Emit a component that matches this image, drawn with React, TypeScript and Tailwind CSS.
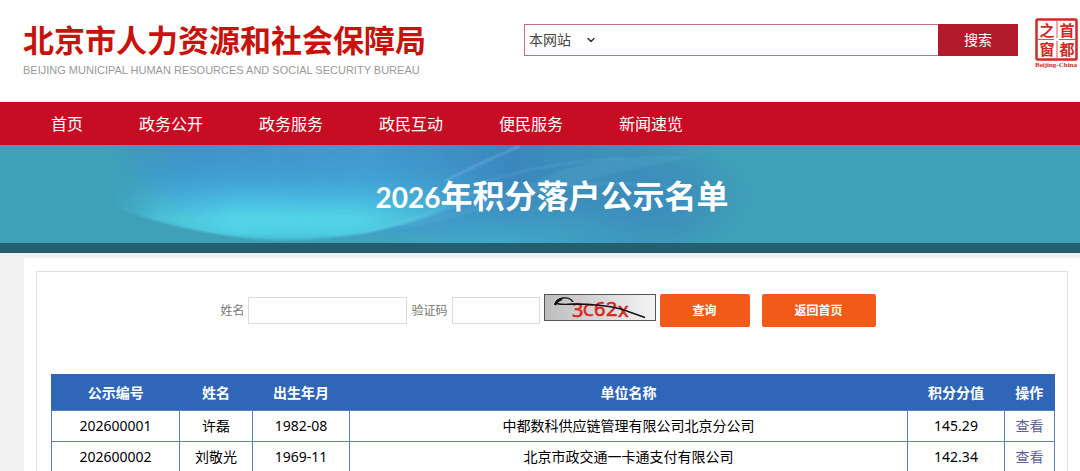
import React, { useState } from 'react';
import { ChevronDown } from 'lucide-react';

const navItems = ['首页', '政务公开', '政务服务', '政民互动', '便民服务', '新闻速览'];

const people = [
    { id: '202600001', name: '许磊', birth: '1982-08', company: '中都数科供应链管理有限公司北京分公司', score: '145.29' },
    { id: '202600002', name: '刘敬光', birth: '1969-11', company: '北京市政交通一卡通支付有限公司', score: '142.34' },
];

function Seal() {
    return (
        <svg width="48" height="54" viewBox="0 0 48 54" className="shrink-0" role="img" aria-label="首都之窗">
            <rect x="4.500" y="3.500" width="40" height="40" rx="1" fill="#fff" stroke="#cf2a24" strokeWidth="2.500" />
            <path d="M25 5v17M25 25v17M6 23.500h16M27 23.500h17" stroke="#d9534a" strokeWidth="1" fill="none" />
            <g
                fill="#cf2a24"
                fontSize="15"
                fontWeight="700"
                textAnchor="middle"
                fontFamily="'Liberation Serif', 'Noto Sans CJK SC', serif"
            >
                <text x="15" y="20">之</text>
                <text x="35" y="20">首</text>
                <text x="15" y="39">窗</text>
                <text x="35" y="39">都</text>
            </g>
            <text
                x="24"
                y="51"
                fill="#cf2a24"
                fontSize="7"
                fontWeight="700"
                textAnchor="middle"
                fontFamily="'Liberation Serif', serif"
            >
                Beijing-China
            </text>
        </svg>
    );
}

function Header() {
    return (
        <header className="flex h-[102px] items-start justify-between bg-white pl-[23px]">
            <a href="#" className="block pt-[22px]">
                <span className="block text-[31px] leading-9 font-bold text-[#c8130c]">北京市人力资源和社会保障局</span>
                <span className="block font-['Liberation_Sans',sans-serif] text-[11px] leading-6 text-[#999]">
                    BEIJING MUNICIPAL HUMAN RESOURCES AND SOCIAL SECURITY BUREAU
                </span>
            </a>
            <div className="flex items-start">
                <form className="mt-6 flex h-8 w-[494px] border border-[#c47088]" onSubmit={(e) => e.preventDefault()}>
                    <div className="relative flex w-20 items-center">
                        <select
                            aria-label="搜索范围"
                            className="h-full w-full appearance-none bg-transparent pl-1 text-sm text-[#444] outline-none"
                        >
                            <option>本网站</option>
                        </select>
                        <ChevronDown className="pointer-events-none absolute right-2 h-3 w-3 text-[#333]" strokeWidth={3} />
                    </div>
                    <input aria-label="搜索内容" className="min-w-0 flex-1 px-2 text-sm outline-none" />
                    <button type="submit" className="-my-px -mr-px w-20 bg-[#b31b2c] text-sm text-white">
                        搜索
                    </button>
                </form>
                <div className="mt-4 ml-[14px]">
                    <Seal />
                </div>
            </div>
        </header>
    );
}

function Nav() {
    return (
        <nav className="flex h-[43px] items-center gap-14 bg-[#c70d24] pl-[51px]">
            {navItems.map((item) => (
                <a key={item} href="#" className="text-base text-white">
                    {item}
                </a>
            ))}
        </nav>
    );
}

function BannerArt() {
    return (
        <svg
            className="absolute inset-0 h-full w-full"
            viewBox="0 0 1080 98"
            preserveAspectRatio="none"
            aria-hidden="true"
        >
            <defs>
                <linearGradient id="sky" x1="112" x2="760" y1="0" y2="0" gradientUnits="userSpaceOnUse">
                    <stop offset="0" stopColor="#3f93cc" stopOpacity="0" />
                    <stop offset="0.12" stopColor="#3f93cc" stopOpacity="0.9" />
                    <stop offset="0.4" stopColor="#429bd0" />
                    <stop offset="0.62" stopColor="#3b87be" />
                    <stop offset="0.82" stopColor="#3c91b8" stopOpacity="0.7" />
                    <stop offset="0.92" stopColor="#3fa0b8" stopOpacity="0" />
                </linearGradient>
                <linearGradient id="water" x1="0" x2="0" y1="0" y2="98" gradientUnits="userSpaceOnUse">
                    <stop offset="0" stopColor="#3f96cc" stopOpacity="0" />
                    <stop offset="0.35" stopColor="#43a8d8" stopOpacity="0.7" />
                    <stop offset="0.55" stopColor="#49bbdf" />
                    <stop offset="0.75" stopColor="#53d6e8" />
                    <stop offset="0.9" stopColor="#4fd0e2" />
                    <stop offset="1" stopColor="#42b0c8" />
                </linearGradient>
                <linearGradient id="fade" x1="112" x2="520" y1="0" y2="0" gradientUnits="userSpaceOnUse">
                    <stop offset="0" stopColor="#000" />
                    <stop offset="0.12" stopColor="#999" />
                    <stop offset="0.3" stopColor="#fff" />
                    <stop offset="0.6" stopColor="#eee" />
                    <stop offset="1" stopColor="#000" />
                </linearGradient>
                <radialGradient id="right">
                    <stop offset="0" stopColor="#3c8dbb" />
                    <stop offset="0.5" stopColor="#3c8dbb" stopOpacity="0.75" />
                    <stop offset="1" stopColor="#3c8dbb" stopOpacity="0" />
                </radialGradient>
                <radialGradient id="shore">
                    <stop offset="0" stopColor="#42adc9" stopOpacity="0.9" />
                    <stop offset="1" stopColor="#42a9c8" stopOpacity="0" />
                </radialGradient>
                <filter id="edge" x="-20%" y="-50%" width="140%" height="200%">
                    <feGaussianBlur stdDeviation="3" />
                </filter>
                <filter id="line" x="-20%" y="-50%" width="140%" height="200%">
                    <feGaussianBlur stdDeviation="1" />
                </filter>
                <mask id="waterMask" maskUnits="userSpaceOnUse" x="100" y="-20" width="460" height="140">
                    <rect x="100" y="-20" width="460" height="140" fill="url(#fade)" />
                </mask>
            </defs>
            <path
                d="M112 -20H760V110H520Q440 90 385 88Q320 94 270 90Q180 82 112 6Z"
                fill="url(#sky)"
                filter="url(#edge)"
            />
            <ellipse cx="635" cy="52" rx="115" ry="62" fill="url(#right)" />
            <ellipse cx="500" cy="100" rx="190" ry="50" fill="url(#shore)" />
            <g mask="url(#waterMask)">
                <path
                    d="M112 -20H560V10Q470 66 385 84Q330 97 270 95Q190 90 112 62Z"
                    fill="url(#water)"
                    filter="url(#line)"
                />
            </g>
            <path d="M400 79Q480 62 540 34T690 12Q600 30 520 54T400 84Z" fill="#8cd3ee" opacity="0.1" filter="url(#line)" />
            <g fill="none" stroke="#8fd0ea" filter="url(#line)">
                <path d="M362 88Q430 72 480 44" strokeWidth="1.500" opacity="0.25" />
                <path d="M445 36Q480 18 520 1" strokeWidth="2" opacity="0.4" />
                <path d="M480 38Q550 16 625 13" strokeWidth="1.500" opacity="0.25" />
                <path d="M560 42Q610 34 690 44" strokeWidth="1.500" opacity="0.2" />
            </g>
        </svg>
    );
}

function Banner() {
    return (
        <div className="relative flex h-[108px] items-center justify-center overflow-hidden border-b-10 border-[#235f70] bg-[#3fa0b8]">
            <BannerArt />
            <h1 className="relative pt-1 pl-6 text-[32px] font-bold text-white">
                <span className="font-['Lato',sans-serif] text-[28px]">2026</span>年积分落户公示名单
            </h1>
        </div>
    );
}

function Captcha() {
    return (
        <svg
            width="112"
            height="27"
            viewBox="0 0 112 27"
            className="shrink-0 self-start overflow-visible"
            role="img"
            aria-label="验证码图片"
        >
            <defs>
                <linearGradient id="captchaBg">
                    <stop offset="0" stopColor="#bdbdbd" />
                    <stop offset="1" stopColor="#f4f4f4" />
                </linearGradient>
            </defs>
            <rect x="0.5" y="0.5" width="111" height="26" fill="url(#captchaBg)" stroke="#555" />
            <g fill="#dc2620" stroke="#dc2620" strokeWidth="0.600" fontSize="20" fontFamily="'Noto Sans', sans-serif">
                <text x="28" y="23">3</text>
                <text x="39" y="22" fontSize="17">C</text>
                <text x="50" y="22">6</text>
                <text x="62" y="22">2</text>
                <text x="74" y="23">x</text>
            </g>
            <path
                d="M11 11Q12 5 19 4Q26 3 29 8M11 9Q16 11 28 10Q58 10 77 15L101 23.500"
                fill="none"
                stroke="#111"
                strokeWidth="1.400"
            />
            <path d="M11 11Q13 6 18 5" fill="none" stroke="#111" strokeWidth="2.500" />
        </svg>
    );
}

function SearchForm() {
    const [name, setName] = useState('');
    const [code, setCode] = useState('');

    return (
        <form
            className="flex items-center justify-center gap-1 pr-[10px] text-xs text-[#777]"
            onSubmit={(e) => e.preventDefault()}
        >
            <label htmlFor="name">姓名</label>
            <input
                id="name"
                value={name}
                onChange={(e) => setName(e.target.value)}
                className="h-[27px] w-[159px] border border-[#ddd] px-2 outline-none"
            />
            <label htmlFor="code">验证码</label>
            <input
                id="code"
                value={code}
                onChange={(e) => setCode(e.target.value)}
                className="h-[27px] w-[88px] border border-[#ddd] px-2 outline-none"
            />
            <Captcha />
            <button type="submit" className="h-[33px] rounded-xs bg-[#f25a19] px-[33px] font-bold text-white">
                查询
            </button>
            <button type="button" className="ml-2 h-[33px] rounded-xs bg-[#f25a19] px-[33px] font-bold text-white">
                返回首页
            </button>
        </form>
    );
}

function ScoreTable() {
    return (
        <table className="mt-[47px] w-full table-fixed border-collapse text-center text-sm text-black">
            <colgroup>
                <col className="w-32" />
                <col className="w-[73px]" />
                <col className="w-[97px]" />
                <col />
                <col className="w-[97px]" />
                <col className="w-[50px]" />
            </colgroup>
            <thead>
                <tr className="h-9 border border-[#2f66b7] bg-[#2f66b7] text-white">
                    <th>公示编号</th>
                    <th>姓名</th>
                    <th>出生年月</th>
                    <th>单位名称</th>
                    <th>积分分值</th>
                    <th>操作</th>
                </tr>
            </thead>
            <tbody>
                {people.map((person) => (
                    <tr key={person.id} className="h-[31px]">
                        <td className="border border-[#5a7fb5]">{person.id}</td>
                        <td className="border border-[#5a7fb5]">{person.name}</td>
                        <td className="border border-[#5a7fb5]">{person.birth}</td>
                        <td className="border border-[#5a7fb5]">{person.company}</td>
                        <td className="border border-[#5a7fb5]">{person.score}</td>
                        <td className="border border-[#5a7fb5]">
                            <a href="#" className="text-[#5f6394]">查看</a>
                        </td>
                    </tr>
                ))}
            </tbody>
        </table>
    );
}

function App() {
    return (
        <div className="overflow-hidden bg-[#f1f1f1] font-['Noto_Sans','Noto_Sans_CJK_SC',sans-serif]">
            <Header />
            <Nav />
            <Banner />
            <main className="mt-[5px] ml-6 bg-white px-3 pt-[13px]">
                <div className="border border-b-0 border-[#e0e0e0] pt-[22px] pr-3 pl-[14px]">
                    <SearchForm />
                    <ScoreTable />
                </div>
            </main>
        </div>
    );
}

export default App;
